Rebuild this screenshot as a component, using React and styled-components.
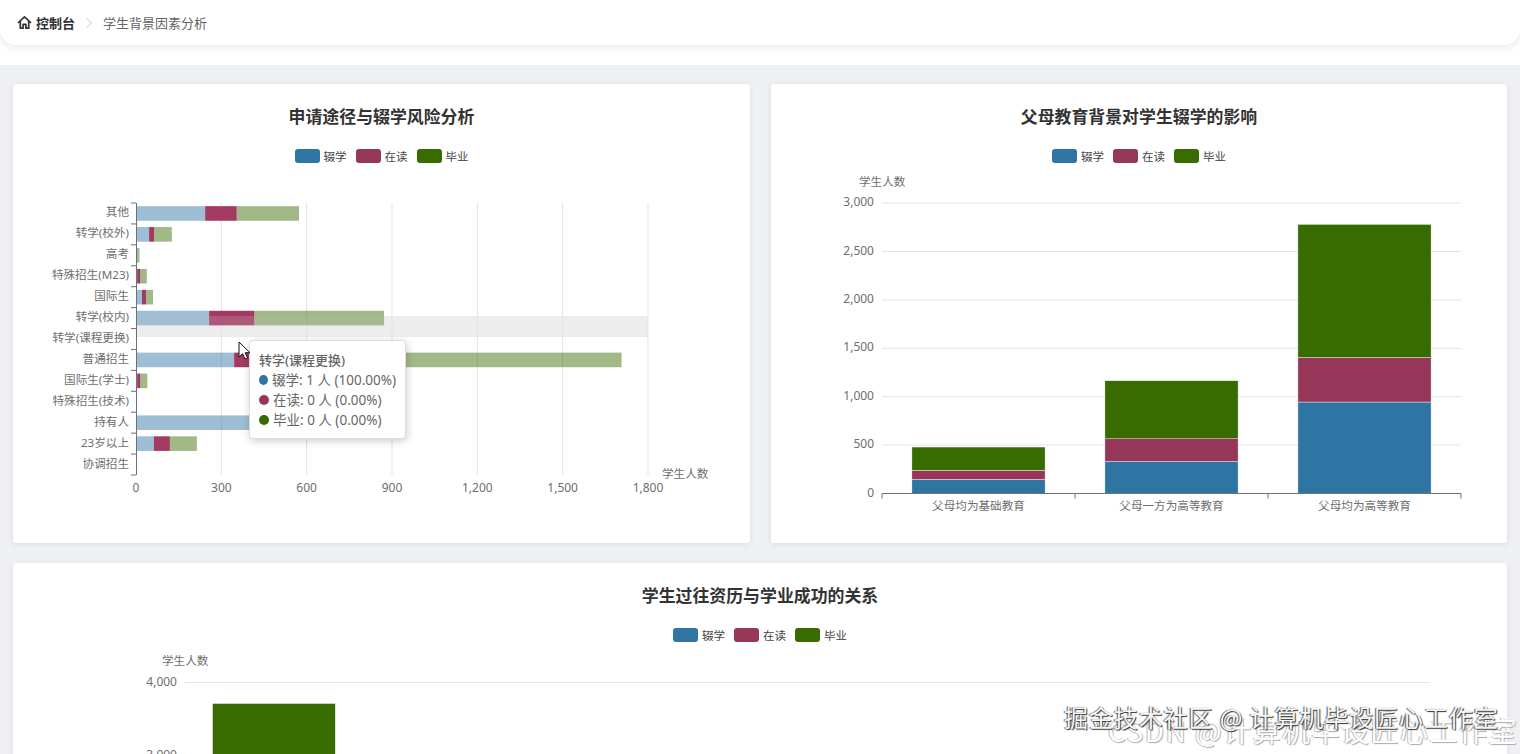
import React from "react";
import styled, { createGlobalStyle } from "styled-components";

const BLUE = "#2f75a4";
const RED = "#963759";
const GREEN = "#386b00";
const FONT = '"Noto Sans", "Noto Sans CJK SC", sans-serif';

const GlobalStyle = createGlobalStyle`
  html, body {
    margin: 0;
    height: 100%;
    overflow: hidden;
    background: #fff;
    font-family: ${FONT};
  }
`;

const Page = styled.div`
  position: relative;
  height: 754px;
  overflow: hidden;
`;

const HeaderBand = styled.div`
  height: 65px;
  background: #fff;
`;

const Header = styled.header`
  height: 45px;
  display: flex;
  align-items: center;
  padding: 0 17px;
  gap: 4px;
  background: #fff;
  border-radius: 0 0 16px 16px;
  box-shadow: 0 2px 8px rgba(0, 0, 0, 0.1);
  font-size: 13px;
`;

const Crumb = styled.span`
  color: ${({ $active }) => ($active ? "#303133" : "#666")};
  font-weight: ${({ $active }) => ($active ? 700 : 400)};
`;

const Separator = styled.svg`
  width: 8px;
  height: 12px;
  margin: 0 6px;
`;

const Content = styled.main`
  background: #eef0f3;
  padding: 19px 13px;
  display: grid;
  grid-template-columns: 737px 736px;
  column-gap: 21px;
  row-gap: 20px;
`;

const Card = styled.section`
  position: relative;
  grid-column: ${({ $wide }) => ($wide ? "1 / -1" : "auto")};
  height: 459px;
  background: #fff;
  border-radius: 3px;
  box-shadow: 0 1px 6px rgba(0, 0, 0, 0.08);
  overflow: hidden;
`;

const Title = styled.h3`
  margin: 0;
  padding-top: 20px;
  height: 46px;
  line-height: 25px;
  box-sizing: border-box;
  text-align: center;
  font-size: 16.9px;
  font-weight: 700;
  color: #333;
`;

const Legend = styled.div`
  display: flex;
  justify-content: center;
  height: 40px;
  padding-top: 19px;
  box-sizing: border-box;
  gap: 9px;
`;

const LegendItem = styled.div`
  display: flex;
  align-items: center;
  height: 14px;
  gap: 4px;
  font-size: 11.5px;
  color: #444;
`;

const Swatch = styled.span`
  width: 25px;
  height: 14px;
  border-radius: 3px;
  background: ${({ $color }) => $color};
`;

const Plot = styled.svg`
  display: block;
  font-family: ${FONT};
`;

const AxisText = styled.text`
  font-size: 12px;
  fill: #6e6e6e;
`;

const CategoryText = styled.text`
  font-size: 11.6px;
  fill: #6e6e6e;
`;

const Tooltip = styled.div`
  position: absolute;
  left: 236px;
  top: 256px;
  width: 157px;
  height: 99px;
  box-sizing: border-box;
  padding: 9px 9px;
  background: #fff;
  border: 1px solid #ddd;
  border-radius: 4px;
  box-shadow: 1px 2px 8px rgba(0, 0, 0, 0.2);
  color: #666;
`;

const TooltipTitle = styled.div`
  font-size: 13px;
  line-height: 20px;
  font-weight: 500;
`;

const TooltipRow = styled.div`
  display: flex;
  align-items: center;
  gap: 4px;
  font-size: 13.5px;
  line-height: 20px;
  white-space: nowrap;
`;

const Dot = styled.span`
  width: 10px;
  height: 10px;
  border-radius: 50%;
  background: ${({ $color }) => $color};
`;

const Cursor = styled.svg`
  position: absolute;
  left: 225px;
  top: 257px;
  width: 13px;
  height: 19px;
`;

const Watermark = styled.div`
  position: absolute;
  white-space: nowrap;
  font-family: "Noto Sans CJK SC", sans-serif;
  pointer-events: none;
`;

const JuejinMark = styled(Watermark)`
  left: 1064px;
  top: 700px;
  font-size: 24px;
  line-height: 34px;
  letter-spacing: 0.9px;
  color: #f6f6f6;
  text-shadow: 1px 1px 1px #333, -1px 0 1px #555;
`;

const CsdnMark = styled(Watermark)`
  left: 1108px;
  top: 712px;
  font-size: 28px;
  line-height: 36px;
  letter-spacing: 1.5px;
  color: #fff;
  text-shadow: 1px 1px 1px #aaa, -1px 0 1px #bbb;
`;

const series = [
  { name: "辍学", color: BLUE },
  { name: "在读", color: RED },
  { name: "毕业", color: GREEN },
];

const routes = [
  ["其他", 243, 111, 219],
  ["转学(校外)", 46, 18, 62],
  ["高考", 1, 1, 10],
  ["特殊招生(M23)", 4, 11, 23],
  ["国际生", 21, 14, 25],
  ["转学(校内)", 257, 159, 456],
  ["转学(课程更换)", 1, 0, 0],
  ["普通招生", 345, 200, 1162],
  ["国际生(学士)", 4, 11, 25],
  ["特殊招生(技术)", 0, 0, 0],
  ["持有人", 930, 0, 0],
  ["23岁以上", 63, 56, 95],
  ["协调招生", 0, 0, 0],
];

const parents = [
  ["父母均为基础教育", 145, 95, 240],
  ["父母一方为高等教育", 330, 235, 600],
  ["父母均为高等教育", 945, 460, 1375],
];

const history = [
  ["", 0, 0, 3712],
  ["", 0, 0, 0],
  ["", 0, 0, 0],
  ["", 0, 0, 0],
  ["", 0, 0, 0],
  ["", 0, 0, 0],
  ["", 0, 0, 0],
];

const fmt = (n) => n.toLocaleString("en-US");

const ChartLegend = () => (
  <Legend>
    {series.map((s) => (
      <LegendItem key={s.name}>
        <Swatch $color={s.color} />
        {s.name}
      </LegendItem>
    ))}
  </Legend>
);

// 横向堆叠图，坐标都是卡片内的像素
const RouteChart = () => {
  const x0 = 123;
  const top = 33;
  const bottom = 305;
  const scale = 512 / 1800;
  const band = (bottom - top) / routes.length;
  return (
    <Plot width="737" height="373" viewBox="0 0 737 373">
      <rect x={x0} y={146} width={512} height={21} fill="#eeeeee" />
      {[300, 600, 900, 1200, 1500, 1800].map((v) => (
        <line key={v} x1={x0 + v * scale} x2={x0 + v * scale} y1={top} y2={bottom} stroke="#e2e2e2" />
      ))}
      {routes.map(([name, ...vals], i) => {
        let left = x0;
        const cy = top + band * (i + 0.5);
        return (
          <g key={name}>
            {vals.map((v, k) => {
              const w = v * scale;
              const rect = (
                <rect
                  key={k}
                  x={left}
                  y={cy - 7.3}
                  width={w}
                  height={14.6}
                  fill={k === 1 ? "#a23a62" : series[k].color}
                  opacity={k === 1 ? 1 : 0.47}
                />
              );
              left += w;
              return rect;
            })}
            <CategoryText x={x0 - 7} y={cy + 3} textAnchor="end">{name}</CategoryText>
          </g>
        );
      })}
      <rect x={x0} y={146} width={512} height={21} fill="rgba(235,235,235,0.18)" />
      <line x1={x0 + 0.5} x2={x0 + 0.5} y1={top} y2={bottom} stroke="#6e7079" />
      {routes.concat([[]]).map((_, i) => (
        <line key={i} x1={x0 - 5} x2={x0} y1={top + band * i} y2={top + band * i} stroke="#6e7079" />
      ))}
      {[0, 300, 600, 900, 1200, 1500, 1800].map((v) => (
        <AxisText key={v} x={x0 + v * scale} y={322} textAnchor="middle">{fmt(v)}</AxisText>
      ))}
      <CategoryText x={649} y={308}>学生人数</CategoryText>
    </Plot>
  );
};

// 纵向堆叠图
const ColumnChart = ({ rows, x0, x1, base, unit, ticks, height, width, nameX, nameY, tickMarks }) => {
  const band = (x1 - x0) / rows.length;
  const barW = band * 0.69;
  return (
    <Plot width={width} height={height} viewBox={`0 0 ${width} ${height}`}>
      {ticks.map((v) => (
        <g key={v}>
          {v > 0 && <line x1={x0} x2={x1} y1={base - v * unit} y2={base - v * unit} stroke="#e4e4e4" />}
          <AxisText x={x0 - 8} y={base - v * unit + 3} textAnchor="end">{fmt(v)}</AxisText>
        </g>
      ))}
      {rows.map(([name, ...vals], i) => {
        let y = base;
        const left = x0 + band * i + (band - barW) / 2;
        return (
          <g key={i}>
            {vals.map((v, k) => {
              const h = v * unit;
              y -= h;
              return <rect key={k} x={left} y={y} width={barW} height={h} fill={series[k].color} stroke="#fff" strokeWidth="0.4" />;
            })}
            <CategoryText x={x0 + band * (i + 0.5)} y={base + 16} textAnchor="middle">{name}</CategoryText>
          </g>
        );
      })}
      <line x1={x0} x2={x1} y1={base} y2={base} stroke="#6e7079" />
      {tickMarks &&
        rows.concat([[]]).map((_, i) => (
          <line key={i} x1={x0 + band * i} x2={x0 + band * i} y1={base} y2={base + 5} stroke="#6e7079" />
        ))}
      <CategoryText x={nameX} y={nameY}>学生人数</CategoryText>
    </Plot>
  );
};

const HomeIcon = () => (
  <svg width="15" height="15" viewBox="0 0 16 16" fill="none" stroke="#303133" strokeWidth="1.8" strokeLinejoin="round" strokeLinecap="round">
    <path d="M1.5 8 8 2l6.500 6" />
    <path d="M3.500 7v7h3v-4h3v4h3V7" />
  </svg>
);

const App = () => (
  <Page>
    <GlobalStyle />
    <HeaderBand>
      <Header>
        <HomeIcon />
        <Crumb $active>控制台</Crumb>
        <Separator viewBox="0 0 8 12" fill="none" stroke="#c0c4cc" strokeWidth="1">
          <path d="M1.500 1 6.500 6l-5 5" />
        </Separator>
        <Crumb>学生背景因素分析</Crumb>
      </Header>
    </HeaderBand>
    <Content>
      <Card>
        <Title>申请途径与辍学风险分析</Title>
        <ChartLegend />
        <RouteChart />
        <Tooltip>
          <TooltipTitle>转学(课程更换)</TooltipTitle>
          <TooltipRow><Dot $color={BLUE} />辍学: 1 人 (100.00%)</TooltipRow>
          <TooltipRow><Dot $color={RED} />在读: 0 人 (0.00%)</TooltipRow>
          <TooltipRow><Dot $color={GREEN} />毕业: 0 人 (0.00%)</TooltipRow>
        </Tooltip>
        <Cursor viewBox="0 0 13 19">
          <path d="M1 1v15l3.600-3.300 2.400 5.300 2.600-1.100-2.400-5.200h4.800z" fill="#fff" stroke="#111" strokeWidth="1" />
        </Cursor>
      </Card>
      <Card>
        <Title>父母教育背景对学生辍学的影响</Title>
        <ChartLegend />
        <ColumnChart
          rows={parents}
          x0={111}
          x1={690}
          base={323.5}
          unit={0.0968}
          ticks={[0, 500, 1000, 1500, 2000, 2500, 3000]}
          width={736}
          height={373}
          nameX={88}
          nameY={16}
          tickMarks
        />
      </Card>
      <Card $wide>
        <Title>学生过往资历与学业成功的关系</Title>
        <ChartLegend />
        <ColumnChart
          rows={history}
          x0={172}
          x1={1417}
          base={325.5}
          unit={0.073}
          ticks={[0, 1000, 2000, 3000, 4000]}
          width={1494}
          height={373}
          nameX={149}
          nameY={16}
        />
      </Card>
    </Content>
    <CsdnMark>CSDN @计算机毕设匠心工作室</CsdnMark>
    <JuejinMark>掘金技术社区 @ 计算机毕设匠心工作室</JuejinMark>
  </Page>
);

export default App;
